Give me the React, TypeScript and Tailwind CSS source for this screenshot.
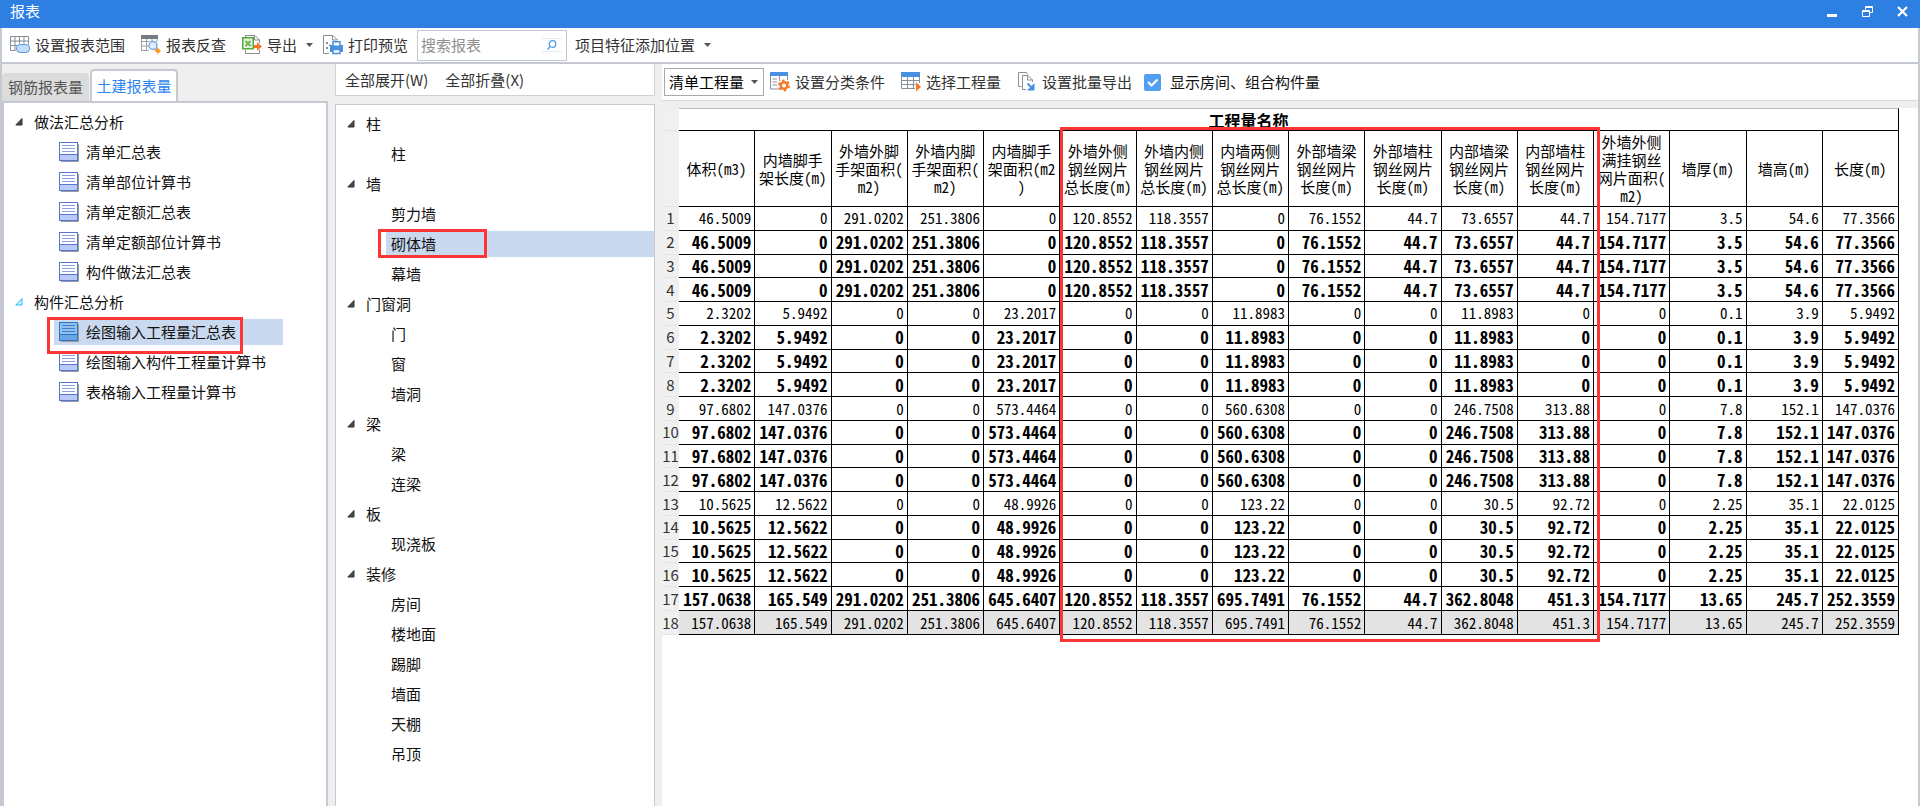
import type { ReactNode } from 'react'

const UI = "font-['Noto_Sans_CJK_SC',sans-serif]"
const MONO = "font-['Noto_Sans_Mono_CJK_SC','Liberation_Mono','Noto_Sans_CJK_SC',monospace]"

const columns = [
  ['体积(m3)'],
  ['内墙脚手', '架长度(m)'],
  ['外墙外脚', '手架面积(', 'm2)'],
  ['外墙内脚', '手架面积(', 'm2)'],
  ['内墙脚手', '架面积(m2', ')'],
  ['外墙外侧', '钢丝网片', '总长度(m)'],
  ['外墙内侧', '钢丝网片', '总长度(m)'],
  ['内墙两侧', '钢丝网片', '总长度(m)'],
  ['外部墙梁', '钢丝网片', '长度(m)'],
  ['外部墙柱', '钢丝网片', '长度(m)'],
  ['内部墙梁', '钢丝网片', '长度(m)'],
  ['内部墙柱', '钢丝网片', '长度(m)'],
  ['外墙外侧', '满挂钢丝', '网片面积(', 'm2)'],
  ['墙厚(m)'],
  ['墙高(m)'],
  ['长度(m)'],
]

const groupA = '46.5009 0 291.0202 251.3806 0 120.8552 118.3557 0 76.1552 44.7 73.6557 44.7 154.7177 3.5 54.6 77.3566'
const groupB = '2.3202 5.9492 0 0 23.2017 0 0 11.8983 0 0 11.8983 0 0 0.1 3.9 5.9492'
const groupC = '97.6802 147.0376 0 0 573.4464 0 0 560.6308 0 0 246.7508 313.88 0 7.8 152.1 147.0376'
const groupD = '10.5625 12.5622 0 0 48.9926 0 0 123.22 0 0 30.5 92.72 0 2.25 35.1 22.0125'
const total =
  '157.0638 165.549 291.0202 251.3806 645.6407 120.8552 118.3557 695.7491 76.1552 44.7 362.8048 451.3 154.7177 13.65 245.7 252.3559'

// each group is one detail row followed by three subtotal rows
const rows = [
  ...[groupA, groupB, groupC, groupD].flatMap((g) => [
    { values: g, bold: false },
    { values: g, bold: true },
    { values: g, bold: true },
    { values: g, bold: true },
  ]),
  { values: total, bold: true },
  { values: total, bold: false },
]

const reportTree = [
  {
    label: '做法汇总分析',
    items: ['清单汇总表', '清单部位计算书', '清单定额汇总表', '清单定额部位计算书', '构件做法汇总表'],
  },
  {
    label: '构件汇总分析',
    active: true,
    items: ['绘图输入工程量汇总表', '绘图输入构件工程量计算书', '表格输入工程量计算书'],
  },
]

const elementTree = [
  { label: '柱', items: ['柱'] },
  { label: '墙', items: ['剪力墙', '砌体墙', '幕墙'] },
  { label: '门窗洞', items: ['门', '窗', '墙洞'] },
  { label: '梁', items: ['梁', '连梁'] },
  { label: '板', items: ['现浇板'] },
  { label: '装修', items: ['房间', '楼地面', '踢脚', '墙面', '天棚', '吊顶'] },
]

function RangeIcon() {
  return (
    <svg width="20" height="20" viewBox="0 0 20 20" fill="none">
      <path d="M.5 1.5h18v8M.5 1.5v14h5M.5 6h18M.5 10.5h7M5 1.5v14M9.5 1.5v7M14 1.5v7" stroke="#858c94" />
      <rect x="6.5" y="9.5" width="13" height="8" rx="3.5" fill="#c3ddf8" stroke="#5b9de0" />
    </svg>
  )
}

function TraceIcon() {
  return (
    <svg width="20" height="20" viewBox="0 0 20 20" fill="none">
      <path d="M.5 1v14.5H8M.5 6.5h8M.5 11h7M5.5 3v12.5M11 3v4M16 3v4" stroke="#9aa0a6" />
      <path d="M0 0h17v4H0z" fill="#747c85" />
      <circle cx="12" cy="10.5" r="4" fill="#e3effc" stroke="#7aa5df" strokeWidth="1.5" />
      <path d="m15 14 3.5 3.5" stroke="#f59a2d" strokeWidth="4" />
    </svg>
  )
}

function ExportIcon() {
  return (
    <svg width="20" height="20" viewBox="0 0 20 20" fill="none">
      <path d="M3.5 3V.5H13l4.500 4.500v3M17.5 15v3.500h-14V15M12.5.5V5h5" stroke="#858c94" />
      <rect x=".75" y="2.750" width="10.500" height="11" fill="#e4f3dc" stroke="#59a63c" strokeWidth="1.5" />
      <path d="m3.5 6 5 5m0-5-5 5" stroke="#6db552" strokeWidth="1.8" />
      <path d="M12 10h3V7l5 4.500-5 4.500v-3h-3z" fill="#f47a2a" />
    </svg>
  )
}

function PrintIcon() {
  return (
    <svg width="20" height="20" viewBox="0 0 20 20" fill="none">
      <path d="M6 18.5H.5V.5H10l4.500 4.500M9.5.5V5h5" stroke="#858c94" />
      <path d="M3 7h2v2H3zM3 12h2v2H3zM6 9.5h1.500V11H6z" fill="#858c94" />
      <path d="M7 10h13v7H7z" fill="#4a90e2" />
      <path d="M10 6.750h7v4.500h-7zM10 14.500h7v4h-7z" fill="#fff" stroke="#4a90e2" strokeWidth="1.5" />
    </svg>
  )
}

function ClassifyIcon() {
  return (
    <svg width="20" height="20" viewBox="0 0 20 20" fill="none">
      <path d="M.5 1v16H9M17.5 4v4" stroke="#8a9097" />
      <path d="M0 0h18v4H0z" fill="#4a90e2" />
      <path d="M2.5 7H7M2.5 10H7M2.5 13H7M9.5 4v5" stroke="#8a9097" />
      <circle cx="14" cy="13.5" r="5" stroke="#f47a2a" strokeWidth="2" strokeDasharray="2.6 2.636" />
      <circle cx="14" cy="13.5" r="3.3" fill="#fff" stroke="#f47a2a" strokeWidth="2.4" />
    </svg>
  )
}

function PickIcon() {
  return (
    <svg width="20" height="20" viewBox="0 0 20 20" fill="none">
      <path d="M.5 1v15.500H14M.5 8.5h18M.5 12.5h14M6.5 4v12.500M12.5 4v12.500M18.5 4v7" stroke="#8a9097" />
      <path d="M0 0h19v5H0z" fill="#4a90e2" />
      <path d="m15 10 5 5-5 4.500z" fill="#f47a2a" />
    </svg>
  )
}

function BatchIcon() {
  return (
    <svg width="20" height="20" viewBox="0 0 20 20" fill="none">
      <path d="M4.5 14.5h-3V.5h8l1.500 2" stroke="#8a9097" />
      <path d="M9 17.5H5.5v-14H11l4.500 4.500v2M10.500 3.5V8h5" stroke="#8a9097" />
      <path d="m10.500 11.500 4 4" stroke="#4a90e2" strokeWidth="2" />
      <path d="M17.5 11v7.500H10z" fill="#4a90e2" />
    </svg>
  )
}

function ReportIcon({ selected }: { selected?: boolean }) {
  return (
    <svg width="20" height="20" viewBox="0 0 20 20" fill="none" className="shrink-0">
      <path d="M2 19.5h17.500V2" stroke="#9a9a9a" />
      <rect x=".5" y=".5" width="18" height="18" fill={selected ? '#8fc0ee' : '#fff'} stroke={selected ? '#2f74c0' : '#5876cf'} />
      <path d="M1 13h17v5H1z" fill={selected ? '#6ba6e4' : '#b9cbfb'} />
      <path d="M1 12.5h17" stroke={selected ? '#2f74c0' : '#5876cf'} />
      <path d="M3 3.5h13M3 6.5h13M3 9.5h13" stroke={selected ? '#3f7fca' : '#8b9fe0'} />
    </svg>
  )
}

function TreeArrow({ active }: { active?: boolean }) {
  return (
    <svg width="8" height="8" viewBox="0 0 8 8" className="shrink-0">
      <path d="M7 .5V7H.8z" fill={active ? '#c8f1ff' : '#4a4a4a'} stroke={active ? '#2bbdf0' : '#333'} />
    </svg>
  )
}

function Caret() {
  return (
    <svg width="7" height="4" viewBox="0 0 7 4" className="shrink-0">
      <path d="M0 0h7L3.5 4z" fill="#555" />
    </svg>
  )
}

function ToolButton({ icon, caret, children }: { icon?: ReactNode; caret?: boolean; children: ReactNode }) {
  return (
    <button className="flex h-7 shrink-0 items-center gap-[5px] whitespace-nowrap text-[#333]">
      {icon}
      <span>{children}</span>
      {caret && <span className="pl-1"><Caret /></span>}
    </button>
  )
}

function TitleBar() {
  return (
    <header className="flex h-7 shrink-0 items-center justify-between bg-[#2d7fe1] pr-3 pb-[6px] pl-[10px] text-white">
      <h1>报表</h1>
      <div className="flex items-center gap-6">
        <button aria-label="最小化">
          <svg width="11" height="11" viewBox="0 0 11 11"><path d="M0 8h10v3H0z" fill="#fff" /></svg>
        </button>
        <button aria-label="还原">
          <svg width="11" height="11" viewBox="0 0 11 11" fill="none" stroke="#fff">
            <path d="M3.5 3.5v-3h7v6h-3" />
            <path d="M3 1.5h8M0 5.5h8" />
            <path d="M.5 4.5h7v6h-7z" />
          </svg>
        </button>
        <button aria-label="关闭">
          <svg width="11" height="11" viewBox="0 0 11 11"><path d="m1 1 9 9m0-9-9 9" stroke="#fff" strokeWidth="2.2" /></svg>
        </button>
      </div>
    </header>
  )
}

function Toolbar() {
  return (
    <div className="flex h-9 shrink-0 items-center border-b-2 border-[#c5cad2] bg-white pl-2">
      <div className="flex items-center gap-4">
        <ToolButton icon={<RangeIcon />}>设置报表范围</ToolButton>
        <ToolButton icon={<TraceIcon />}>报表反查</ToolButton>
        <div className="flex items-center gap-[10px]">
          <ToolButton icon={<ExportIcon />} caret>导出</ToolButton>
          <ToolButton icon={<PrintIcon />}>打印预览</ToolButton>
        </div>
      </div>
      <div className="ml-[9px] flex h-[31px] w-[150px] items-center border border-[#c5c8cd] pr-1 pl-[3px]">
        <input aria-label="搜索报表" placeholder="搜索报表" className="min-w-0 flex-1 outline-none placeholder:text-[#8f8f8f]" />
        <button aria-label="搜索" className="flex h-[14px] w-5 items-center justify-center border-y border-[#e6e9ee]">
          <svg width="10" height="10" viewBox="0 0 10 10" fill="none" stroke="#4f9fe8">
            <circle cx="5.5" cy="4" r="3.3" strokeWidth="1.3" />
            <path d="M3.3 6.3.5 9.5" strokeWidth="1.5" />
          </svg>
        </button>
      </div>
      <div className="ml-2">
        <ToolButton caret>项目特征添加位置</ToolButton>
      </div>
    </div>
  )
}

function ReportPanel() {
  return (
    <aside className="flex w-[326px] shrink-0 flex-col">
      <div className="flex h-[37px] items-end gap-px" role="tablist">
        <button role="tab" aria-selected="false" className="h-7 w-[87px] rounded-t bg-[#dcdcdc] text-[#555]">钢筋报表量</button>
        <button role="tab" aria-selected="true" className="h-8 w-[88px] rounded-t border-2 border-b-0 border-[#c5cad2] bg-white text-[#2d86f0]">
          土建报表量
        </button>
      </div>
      <nav className="flex-1 border-2 border-b-0 border-[#c5cad2] bg-white pt-1">
        {reportTree.map((group) => (
          <div key={group.label}>
            <div className="flex h-[30px] items-center gap-[11px] pl-[11px]">
              <TreeArrow active={group.active} />
              {group.label}
            </div>
            {group.items.map((item) => {
              const selected = item === '绘图输入工程量汇总表'
              return (
                <div key={item} className="relative flex h-[30px] items-center pl-[50px]">
                  <a
                    href="#"
                    className={`flex h-[26px] items-center gap-[7px] pl-[5px] whitespace-nowrap ${selected ? 'w-[229px] bg-[#c9d9f0]' : ''}`}
                  >
                    <ReportIcon selected={selected} />
                    {item}
                  </a>
                  {selected && (
                    <span className="pointer-events-none absolute top-0 left-[43px] z-10 h-[37px] w-[196px] border-3 border-[#fd3535]" />
                  )}
                </div>
              )
            })}
          </div>
        ))}
      </nav>
    </aside>
  )
}

function ElementPanel() {
  return (
    <aside className="flex w-[320px] shrink-0 flex-col gap-2">
      <div className="flex h-8 items-center gap-[17px] border border-t-0 border-[#cfd3d9] bg-white pt-px pl-[9px]">
        <ToolButton>全部展开(W)</ToolButton>
        <ToolButton>全部折叠(X)</ToolButton>
      </div>
      <nav className="flex-1 border border-b-0 border-[#c5cad2] bg-white pt-1">
        {elementTree.map((group) => (
          <div key={group.label}>
            <div className="flex h-[30px] items-center gap-[11px] pl-[11px]">
              <TreeArrow />
              {group.label}
            </div>
            {group.items.map((item) => {
              const selected = item === '砌体墙'
              return (
                <div key={item} className="relative flex h-[30px] items-center pl-[50px]">
                  <a href="#" className={`flex h-[26px] flex-1 items-center pl-[5px] ${selected ? 'bg-[#c9d9f0]' : ''}`}>
                    {item}
                  </a>
                  {selected && (
                    <span className="pointer-events-none absolute top-0 left-[42px] h-[29px] w-[109px] border-3 border-[#fd3535]" />
                  )}
                </div>
              )
            })}
          </div>
        ))}
      </nav>
    </aside>
  )
}

function ReportTable() {
  return (
    <div className={`relative mr-[19px] ${MONO}`}>
      <table className="h-[527px] w-full table-fixed border-separate border-spacing-0 text-black">
        <colgroup>
          <col className="w-[17px]" />
          {columns.map((_, i) => <col key={i} />)}
        </colgroup>
        <thead>
          <tr className="h-[23px]">
            <td className="border-b border-[#e4e4e4] bg-[#f0f0f0]" />
            <th colSpan={16} className="h-[23px] border-t border-r border-b border-black border-t-[#bbb] p-0 pr-20 text-base leading-5 font-bold">
              工程量名称
            </th>
          </tr>
          <tr className="h-[76px]">
            <td className="border-b border-[#e4e4e4] bg-[#f0f0f0]" />
            {columns.map((lines, i) => (
              <th key={i} className="h-[76px] border-r border-b border-black p-0 text-[15px] leading-[18px] font-normal whitespace-nowrap">
                {lines.map((line) => <span key={line} className="block">{line}</span>)}
              </th>
            ))}
          </tr>
        </thead>
        <tbody>
          {rows.map((row, i) => (
            <tr key={i} className={i === 17 ? 'bg-[#e3e3e3]' : 'bg-white'}>
              <th className={`border-b border-[#e4e4e4] bg-[#f0f0f0] p-0 text-[15px] leading-5 font-normal text-[#333] ${UI}`}>{i + 1}</th>
              {row.values.split(' ').map((value, j) => (
                <td
                  key={j}
                  className={`border-r border-b border-black p-0 pr-[3px] text-right leading-5 ${row.bold ? 'text-[17px] font-bold' : 'text-[15px]'}`}
                >
                  {value}
                </td>
              ))}
            </tr>
          ))}
        </tbody>
      </table>
      {/* highlighted wire mesh columns */}
      <span className="pointer-events-none absolute top-[19px] -bottom-[7px] left-[calc(17px+(100%-17px)*5/16)] w-[calc((100%-17px)*7/16+6px)] border-3 border-[#fd3535]" />
    </div>
  )
}

function ReportView() {
  return (
    <main className="flex min-w-0 flex-1 flex-col gap-[7px]">
      <div className="flex h-[37px] shrink-0 items-center border-b border-[#d5d8dd] bg-white pl-[2px]">
        <label className="relative flex items-center">
          <select aria-label="工程量类型" className="h-7 w-[100px] appearance-none border border-[#aaa] bg-white pl-1 text-black">
            <option>清单工程量</option>
          </select>
          <span className="pointer-events-none absolute right-[6px]"><Caret /></span>
        </label>
        <div className="ml-[6px] flex items-center gap-4">
          <ToolButton icon={<ClassifyIcon />}>设置分类条件</ToolButton>
          <ToolButton icon={<PickIcon />}>选择工程量</ToolButton>
          <ToolButton icon={<BatchIcon />}>设置批量导出</ToolButton>
        </div>
        <label className="ml-3 flex items-center gap-[9px] text-[#111]">
          <span className="relative flex">
            <input type="checkbox" defaultChecked className="size-[17px] appearance-none rounded-xs bg-[#519ff5]" />
            <svg width="17" height="17" viewBox="0 0 17 17" fill="none" className="pointer-events-none absolute inset-0">
              <path d="m4 8 3.500 3.500L13.500 5.500" stroke="#fff" strokeWidth="2.2" />
            </svg>
          </span>
          显示房间、组合构件量
        </label>
      </div>
      <div className="flex-1 bg-white">
        <ReportTable />
      </div>
    </main>
  )
}

export default function App() {
  return (
    <div className={`flex min-h-screen flex-col bg-[#efefef] text-[15px] leading-5 text-[#111] ${UI}`}>
      <TitleBar />
      <div className="flex flex-1 flex-col border-x-2 border-[#c5cad2]">
        <Toolbar />
        <div className="flex flex-1 gap-[7px]">
          <ReportPanel />
          <ElementPanel />
          <ReportView />
        </div>
      </div>
    </div>
  )
}
